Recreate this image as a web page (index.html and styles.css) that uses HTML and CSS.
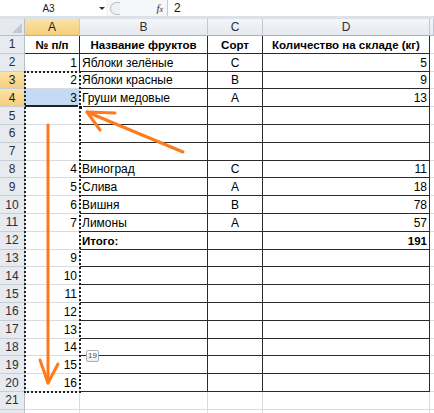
FILE: index.html
```html
<!DOCTYPE html>
<html lang="ru">
<head>
<meta charset="utf-8">
<title>Excel</title>
<link rel="stylesheet" href="styles.css">
</head>
<body>
<div class="fbar">
  <div class="namebox">A3</div>
  <div class="nb-drop"><span class="tri"></span></div>
  <div class="fb-mid"><span class="groove"></span><span class="fx"><i>f</i><span class="x">x</span></span></div>
  <div class="fb-input">2</div>
</div>
<div class="band"></div>
<div class="sheet">
  <div class="corner"><span class="corner-tri"></span></div><div class="ch sel">A</div><div class="ch">B</div><div class="ch">C</div><div class="ch">D</div><div class="ch"></div>

  <div class="rh">1</div><div class="c ta1 ctr b">№ п/п</div><div class="c t ctr b">Название фруктов</div><div class="c t ctr b">Сорт</div><div class="c t ctr b">Количество на складе (кг)</div><div class="c"></div>
  <div class="rh">2</div><div class="c ta2 num">1</div><div class="c t">Яблоки зелёные</div><div class="c t ctr">С</div><div class="c t num">5</div><div class="c"></div>
  <div class="rh sel">3</div><div class="c num">2</div><div class="c t">Яблоки красные</div><div class="c t ctr">В</div><div class="c t num">9</div><div class="c"></div>
  <div class="rh sel">4</div><div class="c num fillsel">3</div><div class="c t">Груши медовые</div><div class="c t ctr">А</div><div class="c t num">13</div><div class="c"></div>
  <div class="rh">5</div><div class="c"></div><div class="c t"></div><div class="c t"></div><div class="c t"></div><div class="c"></div>
  <div class="rh">6</div><div class="c"></div><div class="c t"></div><div class="c t"></div><div class="c t"></div><div class="c"></div>
  <div class="rh">7</div><div class="c"></div><div class="c t"></div><div class="c t"></div><div class="c t"></div><div class="c"></div>
  <div class="rh">8</div><div class="c num">4</div><div class="c t">Виноград</div><div class="c t ctr">С</div><div class="c t num">11</div><div class="c"></div>
  <div class="rh">9</div><div class="c num">5</div><div class="c t">Слива</div><div class="c t ctr">А</div><div class="c t num">18</div><div class="c"></div>
  <div class="rh">10</div><div class="c num">6</div><div class="c t">Вишня</div><div class="c t ctr">В</div><div class="c t num">78</div><div class="c"></div>
  <div class="rh">11</div><div class="c num">7</div><div class="c t">Лимоны</div><div class="c t ctr">А</div><div class="c t num">57</div><div class="c"></div>
  <div class="rh">12</div><div class="c"></div><div class="c t b">Итого:</div><div class="c t"></div><div class="c t num b">191</div><div class="c"></div>
  <div class="rh">13</div><div class="c num">9</div><div class="c t"></div><div class="c t"></div><div class="c t"></div><div class="c"></div>
  <div class="rh">14</div><div class="c num">10</div><div class="c t"></div><div class="c t"></div><div class="c t"></div><div class="c"></div>
  <div class="rh">15</div><div class="c num">11</div><div class="c t"></div><div class="c t"></div><div class="c t"></div><div class="c"></div>
  <div class="rh">16</div><div class="c num">12</div><div class="c t"></div><div class="c t"></div><div class="c t"></div><div class="c"></div>
  <div class="rh">17</div><div class="c num">13</div><div class="c t"></div><div class="c t"></div><div class="c t"></div><div class="c"></div>
  <div class="rh">18</div><div class="c num">14</div><div class="c t"></div><div class="c t"></div><div class="c t"></div><div class="c"></div>
  <div class="rh">19</div><div class="c num">15</div><div class="c t"></div><div class="c t"></div><div class="c t"></div><div class="c"></div>
  <div class="rh">20</div><div class="c num">16</div><div class="c t"></div><div class="c t"></div><div class="c t"></div><div class="c"></div>
  <div class="rh">21</div><div class="c"></div><div class="c"></div><div class="c"></div><div class="c"></div><div class="c"></div>
  <div class="rh"></div><div class="c"></div><div class="c"></div><div class="c"></div><div class="c"></div><div class="c"></div>

  <div class="marquee"></div>
  <div class="handle"></div>
  <div class="tip">19</div>
</div>
<svg class="arrows" width="434" height="413" viewBox="0 0 434 413">
  <g fill="none" stroke="#ff7a1c" stroke-width="3" stroke-linecap="round" stroke-linejoin="round">
    <path d="M183 152 L87 112"/>
    <path d="M115 113 L87 112 L100 130"/>
    <path d="M48 125 L48 383"/>
    <path d="M40 360 L48 383 L58 364"/>
  </g>
</svg>
</body>
</html>
```
FILE: styles.css
```css
* { box-sizing: border-box; }
html, body { margin: 0; padding: 0; }
body {
  width: 434px;
  height: 413px;
  overflow: hidden;
  background: #fff;
  font-family: "Liberation Sans", Arial, sans-serif;
  position: relative;
}

/* formula bar */
.fbar {
  display: flex;
  height: 16px;
  background: #fff;
}
.namebox {
  width: 97px;
  display: flex;
  align-items: center;
  justify-content: center;
  font-size: 10px;
  color: #222;
}
.nb-drop {
  width: 9px;
  display: flex;
  align-items: center;
  justify-content: center;
}
.tri {
  width: 0;
  height: 0;
  border-left: 3px solid transparent;
  border-right: 3px solid transparent;
  border-top: 3px solid #333;
}
.fb-mid {
  width: 61px;
  display: flex;
  align-items: center;
  background: #f6f7f9;
}
.groove {
  width: 10px;
  height: 13px;
  margin-left: 4px;
  border: 1px solid #b9c0c9;
  border-right: none;
  border-radius: 7px 0 0 7px;
  background: #eef0f3;
}
.fx {
  margin-left: auto;
  margin-right: 4px;
  font-family: "Liberation Serif", serif;
  font-size: 11px;
  color: #333;
}
.fx .x { font-size: 8px; font-style: italic; }
.fb-input {
  flex: 1;
  border-left: 1px solid #c6ccd4;
  padding-left: 6px;
  display: flex;
  align-items: center;
  font-size: 12px;
  color: #111;
}
.band {
  height: 3px;
  background: #dde2e8;
}

/* sheet grid */
.sheet {
  position: relative;
  display: grid;
  grid-template-columns: 25px 55px 128px 55px 167px 4px;
  grid-template-rows: 17px repeat(22, 17.8px);
  font-size: 12px;
  color: #000;
}
.corner {
  position: relative;
  background: #e6e9ee;
  border-right: 1px solid #b7bec8;
  border-bottom: 1px solid #b7bec8;
}
.corner-tri {
  position: absolute;
  right: 2px;
  bottom: 2px;
  width: 0;
  height: 0;
  border-left: 10px solid transparent;
  border-bottom: 10px solid #c3c9d1;
}
.ch {
  background: linear-gradient(#f4f6f8, #e5e8ed);
  border-right: 1px solid #c3c9d2;
  border-bottom: 1px solid #a9b1bc;
  display: flex;
  align-items: center;
  justify-content: center;
  font-size: 12px;
  color: #2a2f36;
}
.rh {
  background: #e7eaef;
  border-right: 1px solid #b7bec8;
  border-bottom: 1px solid #c8ced6;
  display: flex;
  align-items: center;
  justify-content: center;
  font-size: 12px;
  color: #2a2f36;
}
.ch.sel, .rh.sel {
  background: linear-gradient(#fbe2a6, #f4cf7b);
  color: #1d1d1d;
}
.c {
  border-right: 1px solid #d8dbdf;
  border-bottom: 1px solid #d8dbdf;
  display: flex;
  align-items: center;
  padding: 1px 2px 0;
  white-space: nowrap;
  overflow: hidden;
}
.c.t {
  border-right-color: #2b2b2b;
  border-bottom-color: #2b2b2b;
}
.c.ta1 {
  border-right-color: #2b2b2b;
  border-bottom-color: #2b2b2b;
}
.c.ta2 {
  border-right-color: #2b2b2b;
}
.ctr { justify-content: center; }
.num { justify-content: flex-end; }
.b { font-weight: bold; font-size: 11.5px; }
.fillsel {
  background: #c4dbf5;
  border-bottom: 2px solid #222;
}

/* overlays */
.marquee {
  position: absolute;
  grid-column: 2 / 3;
  grid-row: 4 / 22;
  top: -1px;
  left: -1px;
  right: -1px;
  bottom: -1px;
  border: 2px dotted #222;
}
.handle {
  position: absolute;
  grid-column: 2 / 3;
  grid-row: 5 / 6;
  right: -3px;
  bottom: -3px;
  width: 5px;
  height: 5px;
  background: #111;
  border: 1px solid #fff;
}
.tip {
  position: absolute;
  grid-column: 3 / 4;
  grid-row: 19 / 20;
  left: 6px;
  top: 11px;
  width: 13px;
  height: 12px;
  border: 1px solid #aab0b8;
  border-radius: 2px;
  background: linear-gradient(#ffffff, #eceef1);
  font-size: 8px;
  color: #555;
  display: flex;
  align-items: center;
  justify-content: center;
}
.arrows {
  position: absolute;
  left: 0;
  top: 0;
  pointer-events: none;
}
```
